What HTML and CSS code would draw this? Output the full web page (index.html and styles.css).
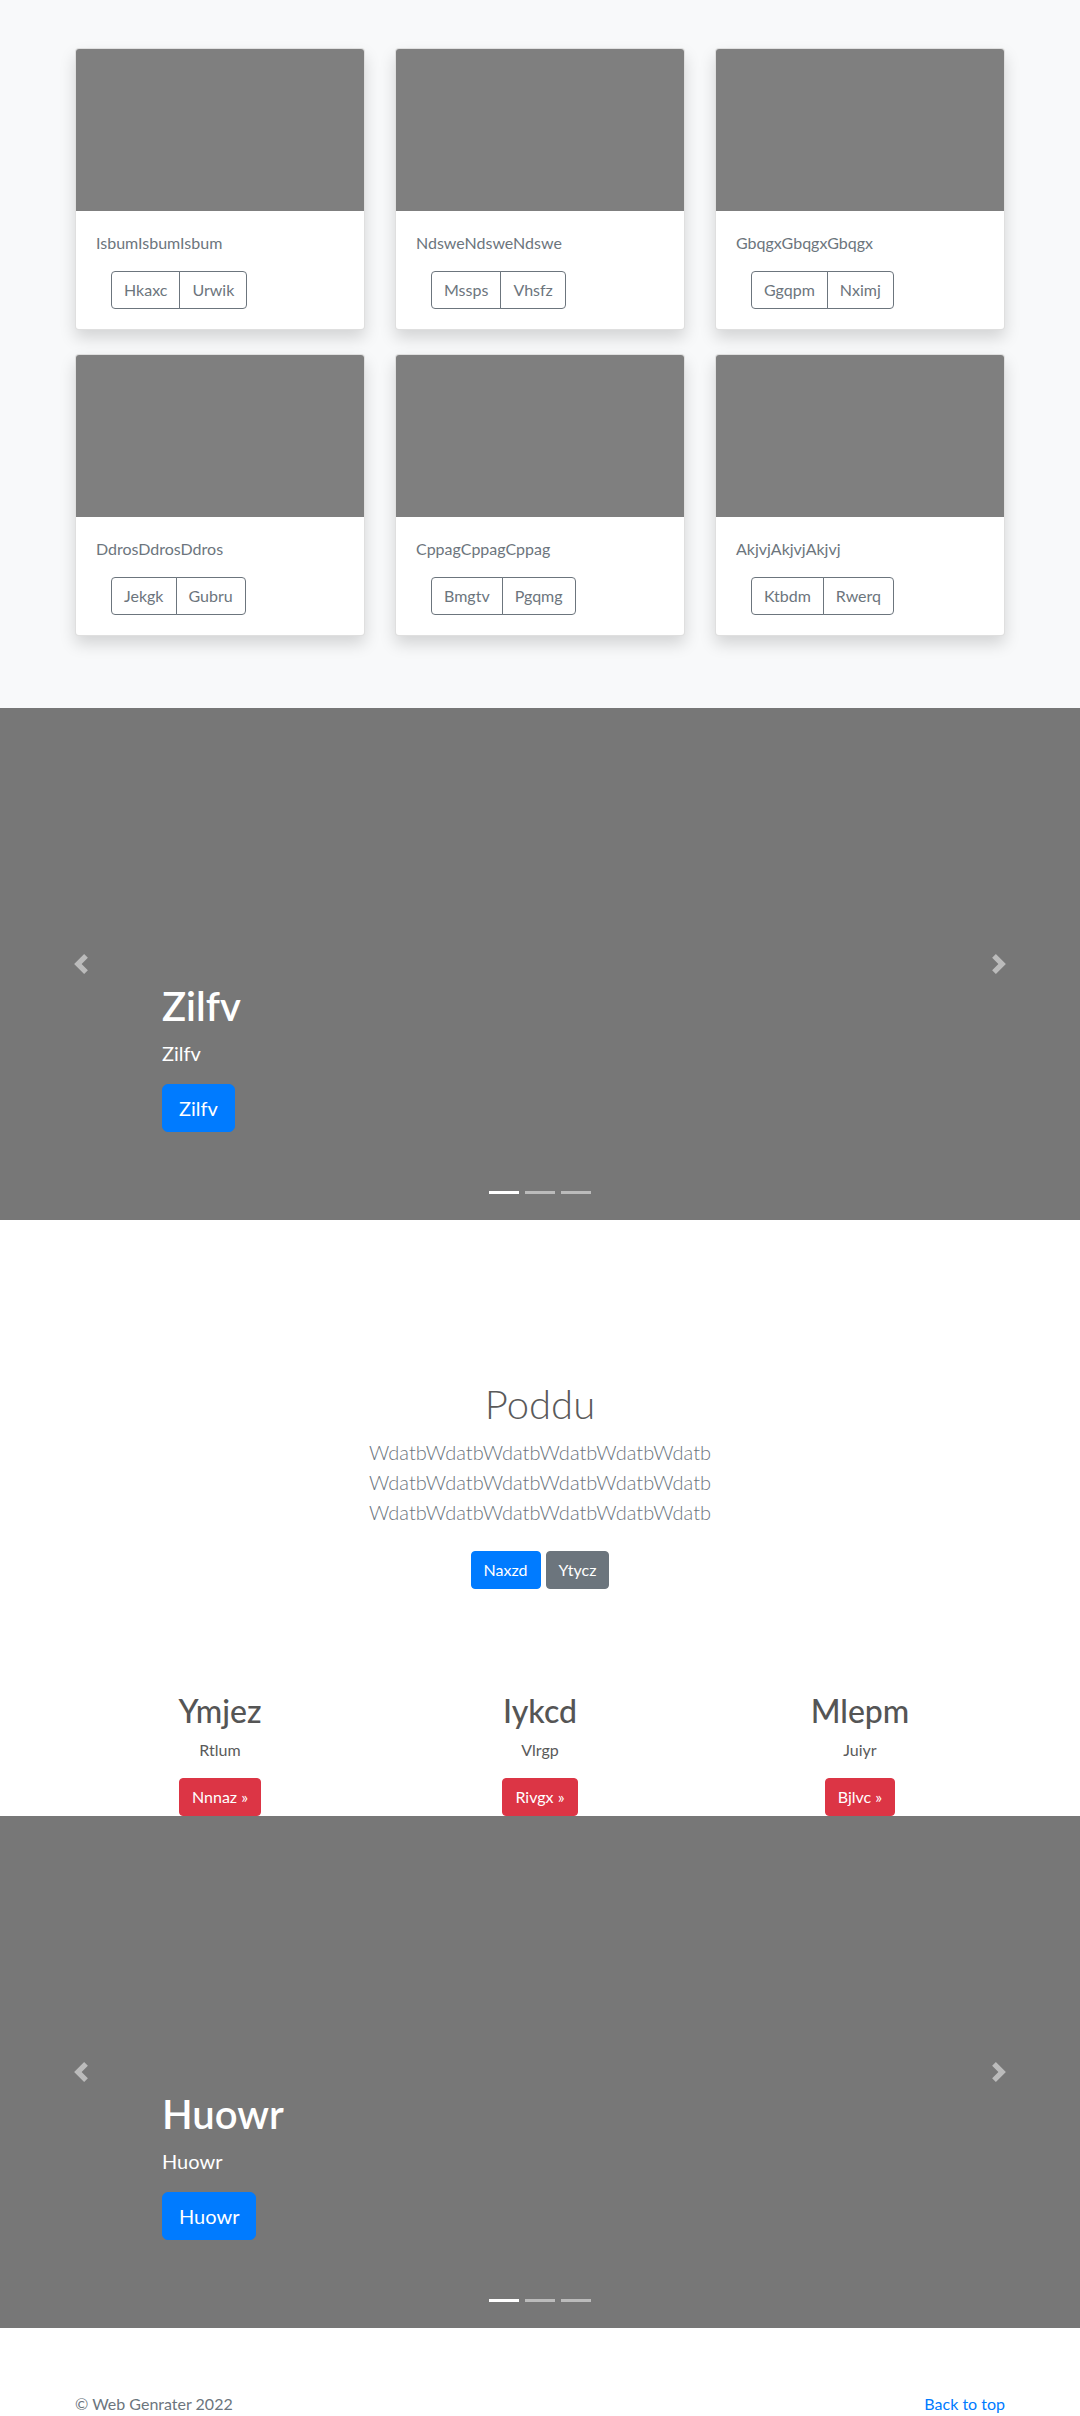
FILE: index.html
```html
<!DOCTYPE html>
<html lang="en">
<head>
<meta charset="utf-8">
<title>Album</title>
<link rel="stylesheet" href="styles.css">
</head>
<body>
<section class="album">
  <div class="container grid">
    <div class="card"><div class="thumb"></div><div class="card-body"><p class="card-text">IsbumIsbumIsbum</p><div class="btn-group"><a class="btn-outline">Hkaxc</a><a class="btn-outline">Urwik</a></div></div></div>
    <div class="card"><div class="thumb"></div><div class="card-body"><p class="card-text">NdsweNdsweNdswe</p><div class="btn-group"><a class="btn-outline">Mssps</a><a class="btn-outline">Vhsfz</a></div></div></div>
    <div class="card"><div class="thumb"></div><div class="card-body"><p class="card-text">GbqgxGbqgxGbqgx</p><div class="btn-group"><a class="btn-outline">Ggqpm</a><a class="btn-outline">Nximj</a></div></div></div>
    <div class="card"><div class="thumb"></div><div class="card-body"><p class="card-text">DdrosDdrosDdros</p><div class="btn-group"><a class="btn-outline">Jekgk</a><a class="btn-outline">Gubru</a></div></div></div>
    <div class="card"><div class="thumb"></div><div class="card-body"><p class="card-text">CppagCppagCppag</p><div class="btn-group"><a class="btn-outline">Bmgtv</a><a class="btn-outline">Pgqmg</a></div></div></div>
    <div class="card"><div class="thumb"></div><div class="card-body"><p class="card-text">AkjvjAkjvjAkjvj</p><div class="btn-group"><a class="btn-outline">Ktbdm</a><a class="btn-outline">Rwerq</a></div></div></div>
  </div>
</section>

<div class="carousel">
  <div class="caption">
    <h1 class="cap-title">Zilfv</h1>
    <p class="cap-lead">Zilfv</p>
    <p class="cap-cta"><a class="btn-lg">Zilfv</a></p>
  </div>
  <a class="ctrl prev"><svg width="20" height="20" viewBox="0 0 8 8"><path d="M5.25 0l-4 4 4 4 1.5-1.5L4.25 4l2.5-2.5L5.25 0z"/></svg></a>
  <a class="ctrl next"><svg width="20" height="20" viewBox="0 0 8 8"><path d="M2.75 0l-1.5 1.5L3.75 4l-2.5 2.5L2.75 8l4-4-4-4z"/></svg></a>
  <ol class="indicators"><li class="active"></li><li></li><li></li></ol>
</div>

<section class="hero">
  <h1 class="hero-title">Poddu</h1>
  <p class="hero-lead">WdatbWdatbWdatbWdatbWdatbWdatb WdatbWdatbWdatbWdatbWdatbWdatb WdatbWdatbWdatbWdatbWdatbWdatb</p>
  <p class="hero-actions"><a class="btn btn-primary">Naxzd</a><a class="btn btn-secondary">Ytycz</a></p>
</section>

<section class="marketing">
  <div class="col">
    <h2>Ymjez</h2>
    <p>Rtlum</p>
    <p class="col-cta"><a class="btn btn-danger">Nnnaz &raquo;</a></p>
  </div>
  <div class="col">
    <h2>Iykcd</h2>
    <p>Vlrgp</p>
    <p class="col-cta"><a class="btn btn-danger">Rivgx &raquo;</a></p>
  </div>
  <div class="col">
    <h2>Mlepm</h2>
    <p>Juiyr</p>
    <p class="col-cta"><a class="btn btn-danger">Bjlvc &raquo;</a></p>
  </div>
</section>

<div class="carousel">
  <div class="caption">
    <h1 class="cap-title">Huowr</h1>
    <p class="cap-lead">Huowr</p>
    <p class="cap-cta"><a class="btn-lg">Huowr</a></p>
  </div>
  <a class="ctrl prev"><svg width="20" height="20" viewBox="0 0 8 8"><path d="M5.25 0l-4 4 4 4 1.5-1.5L4.25 4l2.5-2.5L5.25 0z"/></svg></a>
  <a class="ctrl next"><svg width="20" height="20" viewBox="0 0 8 8"><path d="M2.75 0l-1.5 1.5L3.75 4l-2.5 2.5L2.75 8l4-4-4-4z"/></svg></a>
  <ol class="indicators"><li class="active"></li><li></li><li></li></ol>
</div>

<footer class="footer">
  <div class="container footer-row">
    <p class="copy">&copy; Web Genrater 2022</p>
    <a class="top-link">Back to top</a>
  </div>
</footer>
</body>
</html>
```

FILE: styles.css
```css
* { box-sizing: border-box; }
html, body { margin: 0; padding: 0; }
body {
  font-family: Lato, "Open Sans", sans-serif;
  font-size: 16px;
  line-height: 24px;
  color: #5a5a5a;
  background: #fff;
}
p { margin: 0; }
a { cursor: pointer; }

.container { width: 930px; margin: 0 auto; }

/* Album */
.album { background: #f8f9fa; padding: 48px 0 72px; }
.grid {
  display: grid;
  grid-template-columns: repeat(3, 290px);
  column-gap: 30px;
  row-gap: 24px;
}
.card {
  background: #fff;
  border: 1px solid rgba(0,0,0,.125);
  border-radius: 4px;
  box-shadow: 0 8px 16px rgba(0,0,0,.15);
  overflow: hidden;
}
.thumb { height: 162px; background: #7f7f7f; }
.card-body { padding: 20px; }
.card-text { margin: 0 0 16px; color: #6c757d; }
.btn-group { display: inline-flex; margin-left: 15px; }
.btn-outline {
  display: inline-block;
  padding: 6px 12px;
  line-height: 24px;
  border: 1px solid #6c757d;
  color: #6c757d;
}
.btn-outline:first-child { border-radius: 4px 0 0 4px; }
.btn-outline:last-child { border-radius: 0 4px 4px 0; margin-left: -1px; }

/* Carousel */
.carousel {
  position: relative;
  height: 512px;
  background: #777;
  color: #fff;
  display: flex;
  flex-direction: column;
  justify-content: flex-end;
  padding: 0 162px 68px;
}
.cap-title { font-size: 40px; font-weight: 600; line-height: 48px; margin: 0 0 8px; }
.cap-lead { font-size: 20px; line-height: 30px; margin: 0 0 16px; }
.cap-cta { display: flex; margin: 0 0 20px; }
.btn-lg {
  display: inline-block;
  background: #007bff;
  border: 1px solid #007bff;
  color: #fff;
  font-size: 20px;
  line-height: 30px;
  padding: 8px 16px;
  border-radius: 6px;
}
.ctrl {
  position: absolute;
  top: 0;
  bottom: 0;
  width: 15%;
  display: flex;
  align-items: center;
  justify-content: center;
  opacity: .5;
}
.ctrl svg { fill: #fff; display: block; }
.ctrl.prev { left: 0; }
.ctrl.next { right: 0; }
.indicators {
  position: absolute;
  left: 0;
  right: 0;
  bottom: 26px;
  margin: 0;
  padding: 0;
  list-style: none;
  display: flex;
  justify-content: center;
  gap: 6px;
}
.indicators li { width: 30px; height: 3px; background: rgba(255,255,255,.5); }
.indicators li.active { background: #fff; }

/* Hero */
.hero { text-align: center; padding-top: 160px; }
.hero-title { font-size: 40px; font-weight: 300; line-height: 48px; margin: 0 0 9px; color: #5a5a5a; }
.hero-lead {
  font-size: 20px;
  font-weight: 300;
  line-height: 30px;
  color: #6c757d;
  max-width: 420px;
  margin: 0 auto 24px;
}
.hero-actions { display: flex; justify-content: center; gap: 5px; margin: 0; }
.btn {
  display: inline-block;
  padding: 6px 12px;
  line-height: 24px;
  font-size: 16px;
  border: 1px solid transparent;
  border-radius: 4px;
  color: #fff;
}
.btn-primary { background: #007bff; border-color: #007bff; }
.btn-secondary { background: #6c757d; border-color: #6c757d; }
.btn-danger { background: #dc3545; border-color: #dc3545; }

/* Marketing */
.marketing {
  width: 960px;
  margin: 0 auto;
  padding-top: 103px;
  display: grid;
  grid-template-columns: repeat(3, 1fr);
  text-align: center;
}
.marketing h2 { font-size: 32px; font-weight: 500; line-height: 38px; margin: 0 0 8px; color: #555; }
.marketing p { margin: 0 12px 16px; }
.marketing .col-cta { margin-bottom: 0; }

/* Footer */
.footer { padding-top: 64px; }
.footer-row { display: flex; justify-content: space-between; }
.copy { color: #6c757d; }
.top-link { color: #007bff; }
```
